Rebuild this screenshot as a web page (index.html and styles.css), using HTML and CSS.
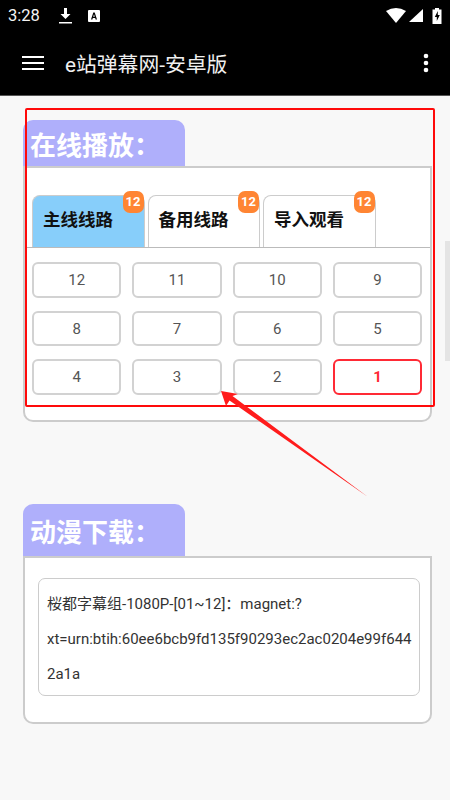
FILE: index.html
```html
<!DOCTYPE html>
<html lang="en">

<head>
  <meta charset="UTF-8">
  <meta name="viewport" content="width=device-width, initial-scale=1.0">
  <title>e站弹幕网-安卓版</title>
  <link rel="stylesheet" href="styles.css">
</head>

<body>

  <div class="statusBar">
    <span class="time">3:28</span>
    <svg class="statusIcon" width="16" height="18" viewBox="0 0 16 18">
      <path d="M6 1h3v6h3.500L7.500 12 2.500 7H6z" fill="#fff"/>
      <rect x="1" y="15" width="13" height="1.500" fill="#fff"/>
    </svg>
    <svg class="statusIcon" width="14" height="14" viewBox="0 0 14 14">
      <rect x="1" y="1" width="12" height="12" rx="1" fill="#fff"/>
      <path d="M4 10.500 6.300 3.500h1.400L10 10.500H8.600L8.200 9H5.800l-.4 1.500zM6.200 7.800h1.600L7 5.200z" fill="#000"/>
    </svg>
    <div class="statusRight">
      <svg class="wifi" width="20" height="15" viewBox="0 0 20 15"><path d="M0 3Q10-3 20 3L10 15z" fill="#fff"/></svg>
      <svg class="signal" width="14" height="15" viewBox="0 0 14 15"><path d="M14 1V14H0z" fill="#fff"/></svg>
      <svg class="battery" width="10" height="16" viewBox="0 0 10 16">
        <path d="M3 0h4v1.500h2.500V16H.5V1.500H3z" fill="#fff"/>
        <path d="M5.800 3 2.800 9h2v4l3-6h-2z" fill="#000"/>
      </svg>
    </div>
  </div>

  <header class="appBar">
    <svg class="menuIcon" width="22" height="16" viewBox="0 0 22 16">
      <path d="M0 1h22v2H0zM0 7h22v2H0zM0 13h22v2H0z" fill="#fff"/>
    </svg>
    <span class="appTitle">e站弹幕网-安卓版</span>
    <svg class="moreIcon" width="6" height="20" viewBox="0 0 6 20">
      <circle cx="3" cy="3" r="2.300" fill="#fff"/>
      <circle cx="3" cy="10" r="2.300" fill="#fff"/>
      <circle cx="3" cy="17" r="2.300" fill="#fff"/>
    </svg>
  </header>

  <main class="page">

    <section class="block playBlock">
      <h2 class="blockTitle">在线播放：</h2>
      <div class="panel">
        <div class="tabs">
          <div class="tab active">主线线路<span class="badge">12</span></div>
          <div class="tab">备用线路<span class="badge">12</span></div>
          <div class="tab">导入观看<span class="badge">12</span></div>
        </div>
        <div class="episodes">
          <div class="episode">12</div>
          <div class="episode">11</div>
          <div class="episode">10</div>
          <div class="episode">9</div>
          <div class="episode">8</div>
          <div class="episode">7</div>
          <div class="episode">6</div>
          <div class="episode">5</div>
          <div class="episode">4</div>
          <div class="episode">3</div>
          <div class="episode">2</div>
          <div class="episode current">1</div>
        </div>
      </div>
    </section>

    <section class="block downloadBlock">
      <h2 class="blockTitle">动漫下载：</h2>
      <div class="panel">
        <p class="magnet">桜都字幕组-1080P-[01~12]：magnet:?<br>xt=urn:btih:60ee6bcb9fd135f90293ec2ac0204e99f644<br>2a1a</p>
      </div>
    </section>

  </main>

  <!-- annotation drawn over the screenshot -->
  <div class="redBox"></div>
  <svg class="arrow" width="160" height="120" viewBox="0 0 160 120">
    <path d="M0 0 17 3 11.500 5 147 106 8.500 9.500 5 15z" fill="#ff1c1c"/>
  </svg>
  <div class="scrollThumb"></div>

</body>

</html>
```

FILE: styles.css
```css
* {
  box-sizing: border-box;
}

html,
body {
  height: 100%;
}

body {
  margin: 0;
  position: relative;
  overflow: hidden;
  background-color: #f8f8f8;
  font-family: Roboto, "Noto Sans CJK SC", sans-serif;
}

.statusBar {
  display: flex;
  align-items: center;
  height: 31px;
  padding: 0 8px;
  background-color: #000;
  color: #f4f4f4;
}

.time {
  font-size: 16.500px;
  width: 50px;
}

.statusIcon {
  margin-right: 13px;
}

.statusRight {
  display: flex;
  align-items: center;
  margin-left: auto;
}

.signal {
  margin-left: 3px;
}

.battery {
  margin-left: 9px;
}

.appBar {
  display: flex;
  align-items: center;
  height: 65px;
  padding: 0 22px;
  background-color: #000;
  border-bottom: 1px solid #555;
  color: #f0f0f0;
}

.appTitle {
  margin-left: 21px;
  font-size: 20.800px;
}

.moreIcon {
  margin-left: auto;
  margin-right: -1px;
}

.page {
  padding: 0 18px 0 23px;
}

.block {
  width: 409px;
}

.playBlock {
  padding-top: 24px;
}

.downloadBlock {
  padding-top: 82px;
}

.blockTitle {
  display: flex;
  align-items: center;
  width: 162px;
  margin: 0;
  padding-left: 7px;
  background-color: #afaffb;
  border-radius: 10px 10px 0 0;
  color: #fff;
  font-size: 26px;
  font-weight: 700;
  white-space: nowrap;
}

.playBlock .blockTitle {
  height: 46px;
}

.downloadBlock .blockTitle {
  height: 52px;
}

.panel {
  background-color: #fff;
  border: 2px solid #ccc;
  border-radius: 0 0 10px 10px;
}

.playBlock .panel {
  height: 256px;
  padding-top: 27px;
}

.downloadBlock .panel {
  height: 168px;
  padding: 20px 10px 0 13px;
}

.tabs {
  display: flex;
  gap: 3px;
  height: 53px;
  padding-left: 7px;
  border-bottom: 1px solid #bbb;
}

.tab {
  position: relative;
  width: 112.500px;
  padding: 10px 0 0 10px;
  background-color: #fff;
  border: 1px solid #ccc;
  border-bottom: none;
  border-radius: 8px 8px 0 0;
  color: #111;
  font-size: 17.500px;
  font-weight: 700;
}

.tab.active {
  background-color: #87cefa;
}

.badge {
  position: absolute;
  top: -5px;
  right: 0;
  width: 21px;
  height: 22px;
  background-color: #ff8533;
  border-radius: 7px;
  color: #fff;
  font-size: 13px;
  font-weight: 700;
  line-height: 22px;
  text-align: center;
}

.episodes {
  display: grid;
  grid-template-columns: repeat(4, 89.300px);
  grid-auto-rows: 35.700px;
  column-gap: 11px;
  row-gap: 13px;
  padding: 14px 0 0 7px;
}

.episode {
  display: flex;
  align-items: center;
  justify-content: center;
  border: 2px solid #d2d2d2;
  border-radius: 6px;
  background-color: #fff;
  color: #555;
  font-size: 15px;
}

.episode.current {
  border-color: #ff2a35;
  color: #ff2a35;
  font-weight: 700;
}

.magnet {
  width: 382px;
  height: 118px;
  margin: 0;
  padding: 8px 0 0 8px;
  border: 1px solid #ccc;
  border-radius: 7px;
  color: #333;
  font-size: 15px;
  line-height: 35px;
  white-space: nowrap;
}

.redBox {
  position: absolute;
  left: 25px;
  top: 108px;
  width: 410px;
  height: 299px;
  border: 2px solid #ff0a0a;
  border-radius: 2px;
}

.arrow {
  position: absolute;
  left: 221px;
  top: 391px;
}

.scrollThumb {
  position: absolute;
  right: 0;
  top: 241px;
  width: 5px;
  height: 120px;
  background-color: #e4e4e4;
}
```
